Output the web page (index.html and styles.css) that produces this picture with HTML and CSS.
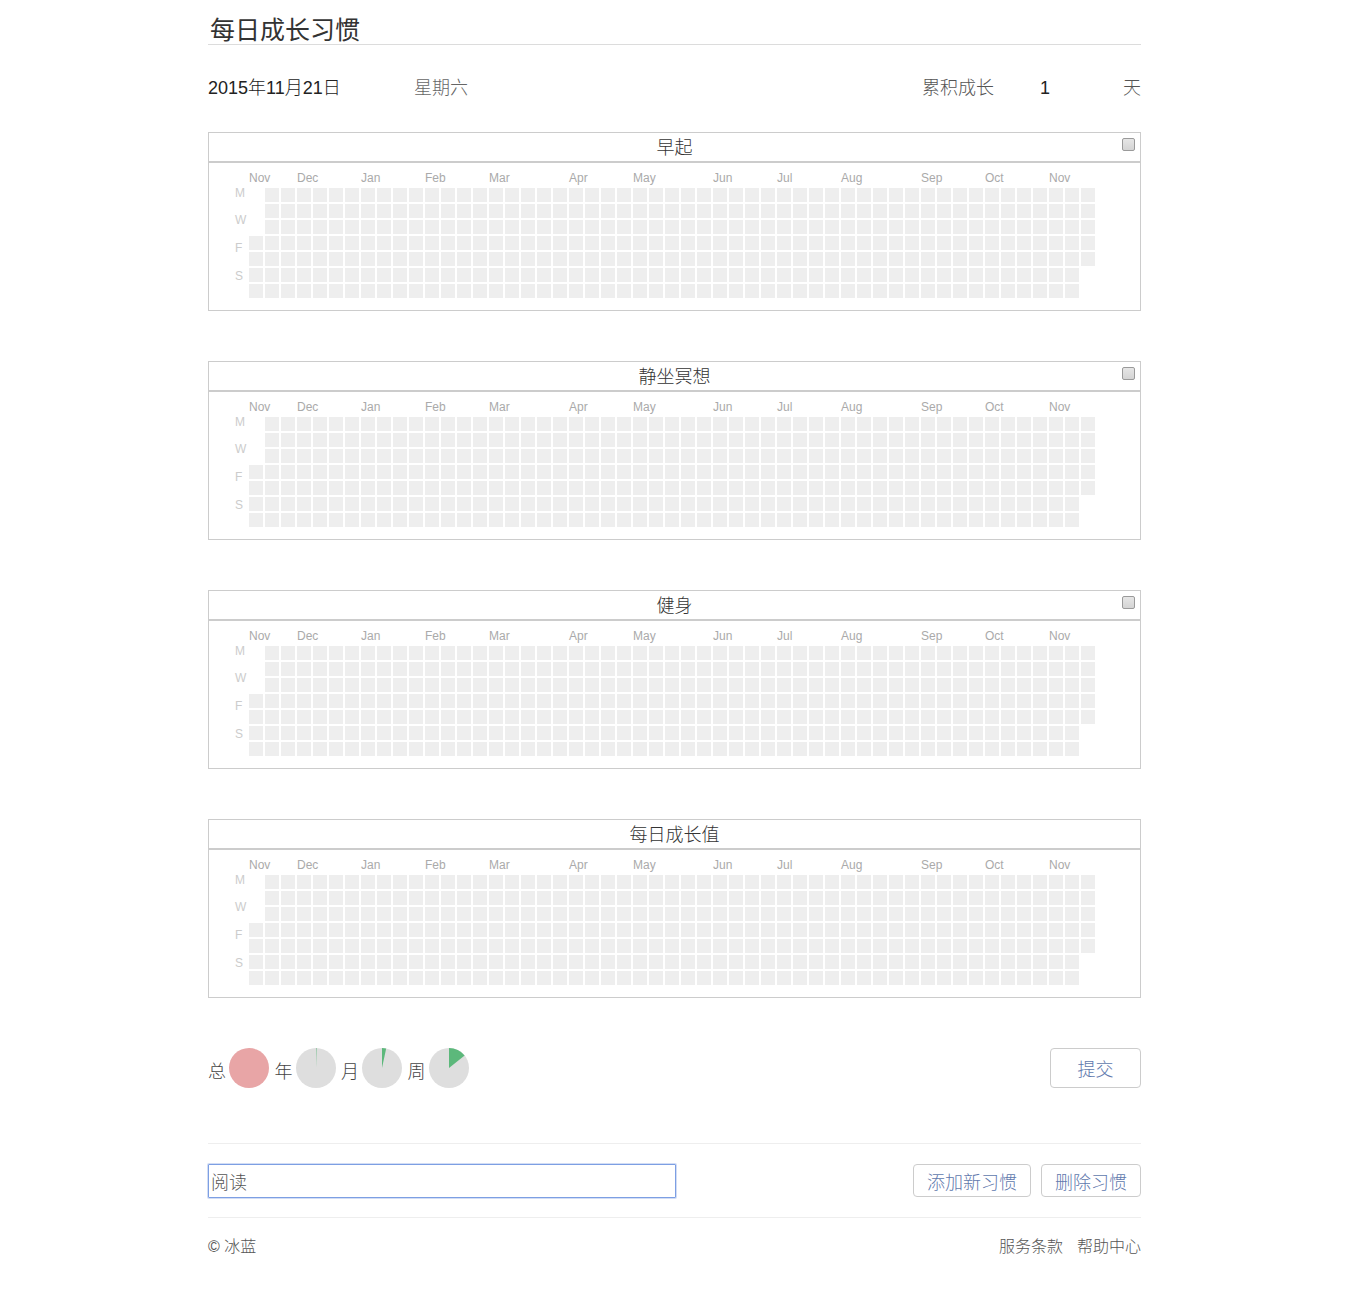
FILE: index.html
```html
<!DOCTYPE html>
<html lang="zh-CN">
<head>
<meta charset="utf-8">
<title>每日成长习惯</title>
<link rel="stylesheet" href="styles.css">
</head>
<body>
<div class="page">
  <h1 class="title">每日成长习惯</h1>

  <div class="date-row">
    <span class="date">2015年11月21日</span>
    <span class="weekday">星期六</span>
    <span class="stat">
      <span class="stat-label">累积成长</span>
      <span class="stat-value">1</span>
      <span class="stat-unit">天</span>
    </span>
  </div>

  <section class="card">
    <header class="card-head">早起<span class="check"></span></header>
    <div class="card-body heatmap"></div>
  </section>

  <section class="card">
    <header class="card-head">静坐冥想<span class="check"></span></header>
    <div class="card-body heatmap"></div>
  </section>

  <section class="card">
    <header class="card-head">健身<span class="check"></span></header>
    <div class="card-body heatmap"></div>
  </section>

  <section class="card">
    <header class="card-head">每日成长值</header>
    <div class="card-body heatmap"></div>
  </section>

  <div class="pie-row">
    <div class="pies">
      <span class="pie-label">总</span>
      <svg class="pie" width="40" height="40" viewBox="0 0 40 40"><circle cx="20" cy="20" r="20" fill="#e8a5a6"/></svg>
      <span class="pie-label">年</span>
      <svg class="pie" width="40" height="40" viewBox="0 0 40 40"><circle cx="20" cy="20" r="20" fill="#dedede"/><path d="M20 20 L20 0 A20 20 0 0 1 20.5 0.01 Z" fill="#5cb87b"/></svg>
      <span class="pie-label">月</span>
      <svg class="pie" width="40" height="40" viewBox="0 0 40 40"><circle cx="20" cy="20" r="20" fill="#dedede"/><path d="M20 20 L20 0 A20 20 0 0 1 24.16 0.44 Z" fill="#5cb87b"/></svg>
      <span class="pie-label">周</span>
      <svg class="pie" width="40" height="40" viewBox="0 0 40 40"><circle cx="20" cy="20" r="20" fill="#dedede"/><path d="M20 20 L20 0 A20 20 0 0 1 35.64 7.53 Z" fill="#5cb87b"/></svg>
    </div>
    <button class="btn btn-submit" type="button">提交</button>
  </div>

  <div class="add-row">
    <input class="habit-input" type="text" value="阅读">
    <div class="add-actions">
      <button class="btn btn-add" type="button">添加新习惯</button>
      <button class="btn btn-del" type="button">删除习惯</button>
    </div>
  </div>

  <footer class="footer">
    <span class="copy">© 冰蓝</span>
    <nav class="links">
      <a href="#">服务条款</a>
      <a href="#">帮助中心</a>
    </nav>
  </footer>
</div>
<script src="script.js"></script>
</body>
</html>
```

FILE: styles.css
```css
html, body {
  margin: 0;
  padding: 0;
  background: #fff;
}

body {
  font-family: "Liberation Sans", "Noto Sans CJK SC", sans-serif;
  font-weight: 300;
  color: #333;
}

.page {
  width: 933px;
  margin: 0 auto;
}

.title {
  margin: 0;
  padding: 15px 0 0 2px;
  height: 29px;
  line-height: 30px;
  font-size: 25px;
  font-weight: 400;
  color: #333;
  border-bottom: 1px solid #dcdcdc;
}

.date-row {
  display: flex;
  align-items: center;
  margin-top: 33px;
  height: 20px;
  line-height: 20px;
  font-size: 18px;
}

.date {
  width: 206px;
  color: #222;
}

.weekday {
  color: #666;
}

.stat {
  margin-left: auto;
  width: 219px;
  display: flex;
  color: #555;
}

.stat-label {
  width: 118px;
}

.stat-value {
  flex: 1;
  color: #222;
}

.stat-unit {
  color: #555;
}

.card {
  margin-top: 34px;
  border: 1px solid #cccccc;
  background: #fff;
}

.card + .card {
  margin-top: 50px;
}

.card-head {
  position: relative;
  box-sizing: border-box;
  height: 30px;
  padding-top: 1px;
  line-height: 28px;
  text-align: center;
  font-size: 18px;
  color: #333;
  border-bottom: 2px solid #cccccc;
}

.check {
  position: absolute;
  right: 5px;
  top: 5px;
  width: 11px;
  height: 11px;
  border: 1px solid #9a9a9a;
  border-radius: 2px;
  background: linear-gradient(#e6e6e6, #d4d4d4);
}

.card-body {
  height: 147px;
}

.heatmap svg {
  display: block;
}

.heatmap .month {
  font-family: "Liberation Sans", sans-serif;
  font-size: 12px;
  fill: #aaaaaa;
}

.heatmap .day {
  font-family: "Liberation Sans", sans-serif;
  font-size: 12px;
  fill: #cccccc;
}

.heatmap .cell {
  fill: #eeeeee;
}

.pie-row {
  display: flex;
  align-items: flex-start;
  justify-content: space-between;
  margin-top: 50px;
  height: 40px;
}

.pies {
  display: flex;
  align-items: center;
  height: 40px;
}

.pie-label {
  font-size: 18px;
  line-height: 20px;
  margin-top: 7px;
  margin-right: 3px;
  color: #444;
}

.pie {
  display: block;
  margin-right: 5.5px;
}

.btn {
  font-family: "Liberation Sans", "Noto Sans CJK SC", sans-serif;
  font-weight: 300;
  font-size: 18px;
  color: #5f79ad;
  background: #fff;
  border: 1px solid #cccccc;
  border-radius: 4px;
  padding: 0;
  cursor: pointer;
}

.btn-submit {
  width: 91px;
  height: 40px;
}

.add-row {
  display: flex;
  justify-content: space-between;
  align-items: flex-start;
  margin-top: 55px;
  padding-top: 20px;
  border-top: 1px solid #eeeeee;
  padding-bottom: 19px;
  border-bottom: 1px solid #eeeeee;
}

.habit-input {
  box-sizing: border-box;
  width: 468px;
  height: 34px;
  margin: 0;
  padding: 0 2px;
  font-family: "Liberation Sans", "Noto Sans CJK SC", sans-serif;
  font-weight: 300;
  font-size: 18px;
  color: #555;
  border: 1px solid #7d9fe3;
  box-shadow: 0 0 0 1px rgba(125, 159, 227, 0.35);
  border-radius: 1px;
  outline: none;
}

.add-actions {
  display: flex;
  gap: 10px;
}

.btn-add {
  width: 118px;
  height: 33px;
}

.btn-del {
  width: 100px;
  height: 33px;
}

.footer {
  display: flex;
  justify-content: space-between;
  align-items: center;
  padding-top: 19px;
  height: 20px;
  line-height: 20px;
  font-size: 16px;
  color: #555;
}

.copy {
  color: #555;
}

.links {
  display: flex;
  gap: 14px;
}

.links a {
  color: #555;
  text-decoration: none;
}
```

FILE: script.js
```js
(function () {
  var NS = "http://www.w3.org/2000/svg";
  var months = [["Nov", 0], ["Dec", 3], ["Jan", 7], ["Feb", 11], ["Mar", 15], ["Apr", 20], ["May", 24], ["Jun", 29], ["Jul", 33], ["Aug", 37], ["Sep", 42], ["Oct", 46], ["Nov", 50]];
  var days = [["M", 33.5], ["W", 60.5], ["F", 88.5], ["S", 116.5]];
  var COLS = 53, X0 = 40, Y0 = 25, STEP = 16, SIZE = 14;

  function el(name, attrs, text) {
    var n = document.createElementNS(NS, name);
    for (var k in attrs) n.setAttribute(k, attrs[k]);
    if (text) n.textContent = text;
    return n;
  }

  document.querySelectorAll(".heatmap").forEach(function (box) {
    var svg = el("svg", { width: 931, height: 147 });
    months.forEach(function (m) {
      svg.appendChild(el("text", { "class": "month", x: X0 + m[1] * STEP, y: 19 }, m[0]));
    });
    days.forEach(function (d) {
      svg.appendChild(el("text", { "class": "day", x: 26, y: d[1] }, d[0]));
    });
    for (var c = 0; c < COLS; c++) {
      var r0 = c === 0 ? 3 : 0;
      var r1 = c === COLS - 1 ? 4 : 6;
      for (var r = r0; r <= r1; r++) {
        svg.appendChild(el("rect", { "class": "cell", x: X0 + c * STEP, y: Y0 + r * STEP, width: SIZE, height: SIZE }));
      }
    }
    box.appendChild(svg);
  });
})();
```
